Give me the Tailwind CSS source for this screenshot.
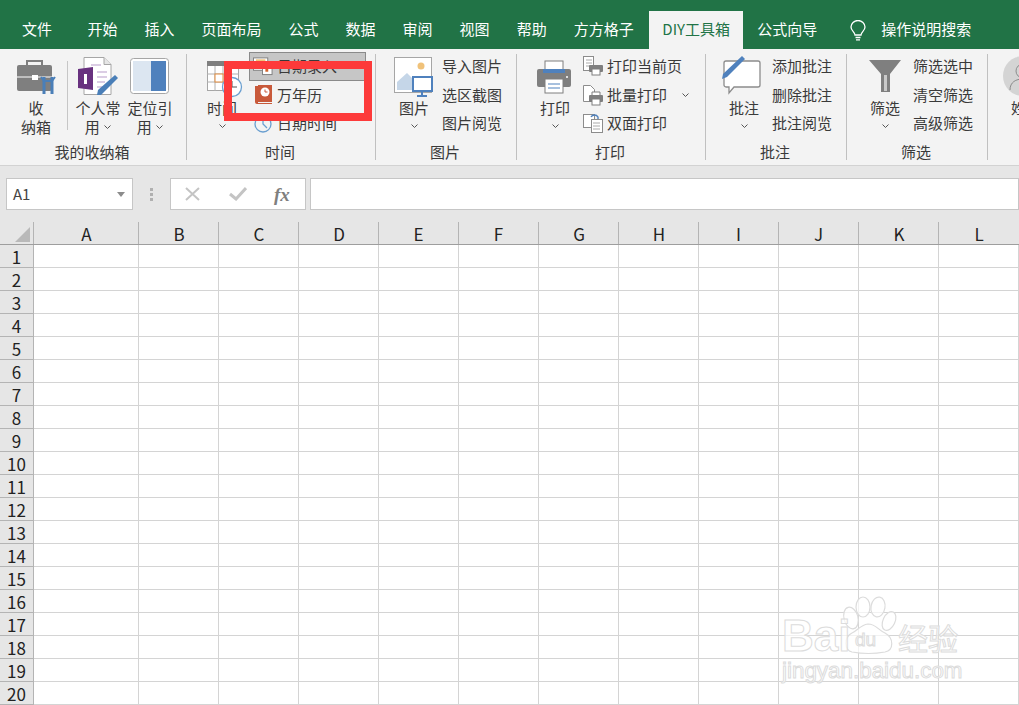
<!DOCTYPE html>
<html lang="zh-CN">
<head>
    <meta charset="UTF-8" />
    <title>Excel</title>
    <script src="https://cdn.jsdelivr.net/npm/@tailwindcss/browser@4"></script>
</head>
<body class="relative w-[1019px] h-[705px] overflow-hidden bg-white text-[15px] text-[#3a3a3a] font-['Noto_Sans_CJK_SC','Noto_Sans',sans-serif]">

    <!-- tabs -->
    <div class="flex h-[49px] bg-[#217346] pt-[11px] pl-[8px] text-white leading-[36px]">
        <div class="px-[14px] mr-[8px]">文件</div>
        <div class="px-[13.5px]">开始</div>
        <div class="px-[13.5px]">插入</div>
        <div class="px-[13.5px]">页面布局</div>
        <div class="px-[13.5px]">公式</div>
        <div class="px-[13.5px]">数据</div>
        <div class="px-[13.5px]">审阅</div>
        <div class="px-[13.5px]">视图</div>
        <div class="px-[13.5px]">帮助</div>
        <div class="px-[13.5px]">方方格子</div>
        <div class="ml-[2px] w-[94px] h-[38px] text-center bg-[#f3f3f3] text-[#217346]">DIY工具箱</div>
        <div class="px-[14px]">公式向导</div>
        <svg class="ml-[19px] mt-[9px]" width="16" height="21" viewBox="0 0 16 21" fill="none" stroke="#fff" stroke-width="1.3"><path d="M5 15c0-3-4-4-4-8a7 6.500 0 0 1 14 0c0 4-4 5-4 8z" /><path d="M5.500 17.500h5M6 19.800h4" /></svg>
        <div class="ml-[15px]">操作说明搜索</div>
    </div>

    <!-- ribbon -->
    <div class="flex h-[117px] bg-[#f3f3f3] border-b border-[#d2d2d2] overflow-hidden">

        <!-- 我的收纳箱 -->
        <div class="w-[186px] shrink-0 flex flex-col">
            <div class="h-[93px] flex">
                <div class="w-[50px] ml-[11px] pt-[8px] flex flex-col items-center">
                    <svg width="40" height="38" viewBox="0 0 40 38"><path d="M11 8V4h15v4" fill="none" stroke="#7f7f7f" stroke-width="2" /><rect x="1" y="8" width="35" height="26" rx="2" fill="#7f7f7f" /><path d="M1 20h35" stroke="#fff" /><rect x="16" y="18" width="6" height="5" fill="#fff" /><path d="M28 20v17M36 20v17" stroke="#4a7fb8" stroke-width="3" /><path d="M25 20l3 4 8 0 3-4" fill="none" stroke="#4a7fb8" stroke-width="2" /></svg>
                    <div class="mt-[3px] leading-[19px] text-center">收<br />纳箱</div>
                </div>
                <div class="ml-[6px] mt-[12px] w-px h-[69px] bg-[#c6c6c6]"></div>
                <div class="w-[46px] ml-[7px] pt-[8px] flex flex-col items-center">
                    <svg width="42" height="38" viewBox="0 0 42 38"><path d="M7 .5h20l7 7v30H7z" fill="#fff" stroke="#a6a6a6" /><path d="M27 .5v7h7" fill="#e6e6e6" stroke="#a6a6a6" /><path d="M14 8h10M20 15h10M20 20h10M20 25h8M20 30h6" stroke="#b79bc9" /><path d="M1 12l15-2v23l-15-2z" fill="#68317f" /><path d="M7 17h3v10h-3z" fill="#fff" /><path d="M38 18l3 3-17 17-4 0 1-5z" fill="#4a7fb8" /></svg>
                    <div class="mt-[3px] leading-[19px] whitespace-nowrap text-center">个人常<br />用 <svg class="inline ml-[1px] mb-[3px]" width="7" height="4" viewBox="0 0 7 4" fill="none" stroke="#555"><path d="M.5.500l3 3 3-3" /></svg></div>
                </div>
                <div class="w-[46px] ml-[6px] pt-[8px] flex flex-col items-center">
                    <svg width="40" height="38" viewBox="0 0 40 38"><rect x=".5" y="1.500" width="38" height="35" rx="3" fill="#fff" stroke="#a6a6a6" /><rect x="3" y="4" width="18" height="30" fill="#dce6f1" /><rect x="21" y="4" width="15" height="30" fill="#4f81bd" /></svg>
                    <div class="mt-[3px] leading-[19px] whitespace-nowrap text-center">定位引<br />用 <svg class="inline ml-[1px] mb-[3px]" width="7" height="4" viewBox="0 0 7 4" fill="none" stroke="#555"><path d="M.5.500l3 3 3-3" /></svg></div>
                </div>
            </div>
            <div class="h-[20px] leading-[20px] text-center pr-[2px]">我的收纳箱</div>
        </div>
        <div class="w-px h-[106px] mt-[5px] bg-[#c0c0c0] shrink-0"></div>

        <!-- 时间 -->
        <div class="w-[188px] shrink-0 flex flex-col">
            <div class="h-[93px] flex">
                <div class="w-[50px] ml-[10px] pt-[8px] flex flex-col items-center">
                    <svg class="overflow-visible" width="38" height="38" viewBox="0 0 38 38"><g transform="translate(4 4)"><rect x=".5" y=".5" width="31" height="29" fill="#fff" stroke="#a6a6a6" /><rect y="0" width="32" height="5" fill="#7f7f7f" /><path d="M8 5v25M16 5v25M24 5v25M0 13h32M0 21h32" stroke="#b0b0b0" /><rect x="8" y="13" width="8" height="8" fill="#fff" stroke="#e08a3c" /></g><circle cx="29" cy="30" r="9.500" fill="#fff" stroke="#6a9fd0" stroke-width="1.300" /><path d="M29 24v6h5" fill="none" stroke="#555" /></svg>
                    <div class="mt-[3px] leading-[19px]">时间</div>
                    <svg class="mt-[7px]" width="7" height="4" viewBox="0 0 7 4" fill="none" stroke="#555"><path d="M.5.500l3 3 3-3" /></svg>
                </div>
                <div class="ml-[2px] mt-[3px] w-[117px]">
                    <div class="h-[29px] flex items-center pl-[3px] pb-[1px] gap-[4px] bg-[#c6c6c6] border border-[#8a8a8a]">
                        <svg width="20" height="20" viewBox="0 0 21 20"><rect x=".5" y="1.500" width="15" height="13" fill="#fff" stroke="#7f7f7f" /><rect x="3" y="3" width="10" height="5" fill="#f0c27a" /><rect x="10" y="10" width="10" height="9" fill="#fff" stroke="#7f7f7f" /><rect x="13" y="13" width="3" height="3" fill="#d2622a" /></svg>
                        <span>日期录入</span>
                    </div>
                    <div class="h-[29px] flex items-center pl-[6px] pb-[1px] gap-[5px]">
                        <svg width="17" height="20" viewBox="0 0 17 20"><path d="M0 1h3v17h14v1H2a2 2 0 0 1-2-2z" fill="#c8593a" /><rect x="3" y="0" width="14" height="17" fill="#c8593a" /><circle cx="10" cy="7" r="4.500" fill="#fff" /><path d="M10 4.500V7h2.500" fill="none" stroke="#c8593a" /></svg>
                        <span>万年历</span>
                    </div>
                    <div class="h-[29px] flex items-center pl-[5px] pb-[2px] gap-[5px]">
                        <svg width="18" height="18" viewBox="0 0 18 18" fill="none" stroke="#6a9fd0" stroke-width="1.300"><circle cx="9" cy="9" r="8" /><path d="M9 3v6l4 4" /></svg>
                        <span>日期时间</span>
                    </div>
                </div>
            </div>
            <div class="h-[20px] leading-[20px] text-center pr-[2px]">时间</div>
        </div>
        <div class="w-px h-[106px] mt-[5px] bg-[#c0c0c0] shrink-0"></div>

        <!-- 图片 -->
        <div class="w-[140px] shrink-0 flex flex-col">
            <div class="h-[93px] flex">
                <div class="w-[50px] ml-[13px] pt-[8px] flex flex-col items-center">
                    <svg width="40" height="40" viewBox="0 0 40 40" class="-mb-[2px]"><rect x=".5" y=".5" width="37" height="35" fill="#fff" stroke="#a6a6a6" /><circle cx="27" cy="9" r="3.500" fill="#f0c27a" /><path d="M3 33v-8l10-9 9 9v8z" fill="#c5d6e8" /><rect x="19" y="20" width="19" height="14" fill="#fff" stroke="#4f81bd" stroke-width="2" /><path d="M28 34v4M23 39h10" stroke="#4f81bd" stroke-width="2" /></svg>
                    <div class="mt-[3px] leading-[19px]">图片</div>
                    <svg class="mt-[7px]" width="7" height="4" viewBox="0 0 7 4" fill="none" stroke="#555"><path d="M.5.500l3 3 3-3" /></svg>
                </div>
                <div class="ml-[3px] mt-[3px] leading-[28.5px]">
                    <div>导入图片</div>
                    <div>选区截图</div>
                    <div>图片阅览</div>
                </div>
            </div>
            <div class="h-[20px] leading-[20px] text-center pr-[2px]">图片</div>
        </div>
        <div class="w-px h-[106px] mt-[5px] bg-[#c0c0c0] shrink-0"></div>

        <!-- 打印 -->
        <div class="w-[188px] shrink-0 flex flex-col">
            <div class="h-[93px] flex">
                <div class="w-[50px] ml-[13px] pt-[8px] flex flex-col items-center">
                    <svg class="-ml-[2px]" width="36" height="38" viewBox="0 0 36 38"><rect x="9" y="4" width="18" height="12" fill="#fff" stroke="#7f7f7f" /><path d="M3 12h30a2 2 0 0 1 2 2v14a2 2 0 0 1-2 2H3a2 2 0 0 1-2-2V14a2 2 0 0 1 2-2z" fill="#7f7f7f" /><path d="M7 12h22v4H7z" fill="#4f81bd" /><rect x="9" y="22" width="18" height="14" fill="#fff" stroke="#7f7f7f" /><path d="M12 27h12M12 31h12" stroke="#4f81bd" /><circle cx="31" cy="20" r="1" fill="#fff" /></svg>
                    <div class="mt-[3px] leading-[19px]">打印</div>
                    <svg class="mt-[7px]" width="7" height="4" viewBox="0 0 7 4" fill="none" stroke="#555"><path d="M.5.500l3 3 3-3" /></svg>
                </div>
                <div class="ml-[3px] mt-[3px] leading-[28.5px]">
                    <div class="flex items-center gap-[4px] h-[28.500px]">
                        <svg width="20" height="20" viewBox="0 0 20 20"><rect x=".5" y=".5" width="10" height="14" fill="#fff" stroke="#8c8c8c" /><path d="M3 4h6M3 7h6M3 10h4" stroke="#aaa" /><rect x="6" y="9" width="14" height="7" rx="1" fill="#7f7f7f" /><rect x="9" y="13" width="8" height="6" fill="#fff" stroke="#7f7f7f" /></svg>
                        <span>打印当前页</span>
                    </div>
                    <div class="flex items-center gap-[4px] h-[28.500px]">
                        <svg width="20" height="22" viewBox="0 0 20 22"><path d="M.5 1.500h7l4 4v12H.5z" fill="#fff" stroke="#8c8c8c" /><rect x="6" y="11" width="14" height="7" rx="1" fill="#7f7f7f" /><rect x="9" y="15" width="8" height="6" fill="#fff" stroke="#7f7f7f" /><path d="M9 11V8h8v3" fill="#fff" stroke="#7f7f7f" /></svg>
                        <span>批量打印</span>
                        <svg class="ml-[11px]" width="7" height="4" viewBox="0 0 7 4" fill="none" stroke="#555"><path d="M.5.500l3 3 3-3" /></svg>
                    </div>
                    <div class="flex items-center gap-[4px] h-[28.500px]">
                        <svg width="20" height="20" viewBox="0 0 20 20" fill="#fff" stroke="#8c8c8c"><rect x=".5" y="1.500" width="11" height="13" /><rect x="8.500" y="6.500" width="11" height="13" /><path d="M10 10h7M10 13h7M10 16h7" stroke="#aaa" /><path d="M8 4a4 4 0 0 1 7 0l0 2" fill="none" stroke="#4f81bd" stroke-width="1.400" /></svg>
                        <span>双面打印</span>
                    </div>
                </div>
            </div>
            <div class="h-[20px] leading-[20px] text-center pr-[2px]">打印</div>
        </div>
        <div class="w-px h-[106px] mt-[5px] bg-[#c0c0c0] shrink-0"></div>

        <!-- 批注 -->
        <div class="w-[140px] shrink-0 flex flex-col">
            <div class="h-[93px] flex">
                <div class="w-[50px] ml-[13px] pt-[7px] flex flex-col items-center">
                    <svg class="-ml-[4px]" width="40" height="39" viewBox="0 0 40 39"><path d="M5 5h31a2 2 0 0 1 2 2v22a2 2 0 0 1-2 2H12l-5 6v-6H4a2 2 0 0 1-2-2V7a2 2 0 0 1 2-2z" fill="#fff" stroke="#8c8c8c" stroke-width="1.300" /><path d="M20 0l3 3L5 21l-5 2 1-5z" fill="#4f81bd" /></svg>
                    <div class="mt-[3px] leading-[19px]">批注</div>
                    <svg class="mt-[7px]" width="7" height="4" viewBox="0 0 7 4" fill="none" stroke="#555"><path d="M.5.500l3 3 3-3" /></svg>
                </div>
                <div class="ml-[3px] mt-[3px] leading-[28.5px]">
                    <div>添加批注</div>
                    <div>删除批注</div>
                    <div>批注阅览</div>
                </div>
            </div>
            <div class="h-[20px] leading-[20px] text-center pr-[2px]">批注</div>
        </div>
        <div class="w-px h-[106px] mt-[5px] bg-[#c0c0c0] shrink-0"></div>

        <!-- 筛选 -->
        <div class="w-[140px] shrink-0 flex flex-col">
            <div class="h-[93px] flex">
                <div class="w-[50px] ml-[13px] pt-[11px] flex flex-col items-center">
                    <svg width="34" height="35" viewBox="0 0 34 35"><path d="M1 0h32L22 14v18h-9V14z" fill="#7f7f7f" /><path d="M16 15h3v16h-3z" fill="#c9c9c9" /></svg>
                    <div class="mt-[3px] leading-[19px]">筛选</div>
                    <svg class="mt-[7px]" width="7" height="4" viewBox="0 0 7 4" fill="none" stroke="#555"><path d="M.5.500l3 3 3-3" /></svg>
                </div>
                <div class="ml-[3px] mt-[3px] leading-[28.5px]">
                    <div>筛选选中</div>
                    <div>清空筛选</div>
                    <div>高级筛选</div>
                </div>
            </div>
            <div class="h-[20px] leading-[20px] text-center pr-[2px]">筛选</div>
        </div>
        <div class="w-px h-[106px] mt-[5px] bg-[#c0c0c0] shrink-0"></div>

        <!-- 姓名 -->
        <div class="pl-[15px] pt-[7px] shrink-0">
            <svg width="40" height="40" viewBox="0 0 40 40"><circle cx="20" cy="20" r="20" fill="#d4d4d4" /><circle cx="20" cy="15" r="7" fill="none" stroke="#8c8c8c" /><path d="M7 34c0-8 6-11 13-11s13 3 13 11" fill="none" stroke="#8c8c8c" /></svg>
            <div class="mt-[2px] ml-[8px] leading-[19px]">姓名</div>
        </div>
    </div>

    <!-- formula bar -->
    <div class="flex h-[56px] bg-[#e6e6e6] pt-[12px] pl-[6px]">
        <div class="w-[127px] h-[32px] bg-white border border-[#c6c6c6] flex items-center justify-between pl-[6px] pr-[7px] text-[#444]">
            <span>A1</span>
            <svg width="8" height="5" viewBox="0 0 8 5"><path d="M0 0h8L4 5z" fill="#8c8c8c" /></svg>
        </div>
        <div class="w-[37px] flex flex-col items-center justify-center gap-[2px] h-[32px] pr-[1px]">
            <div class="w-[3px] h-[3px] bg-[#b0b0b0]"></div>
            <div class="w-[3px] h-[3px] bg-[#b0b0b0]"></div>
            <div class="w-[3px] h-[3px] bg-[#b0b0b0]"></div>
        </div>
        <div class="w-[136px] h-[32px] bg-white border border-[#c6c6c6] flex items-center pl-[14px]">
            <svg width="15" height="14" viewBox="0 0 15 14" fill="none" stroke="#c4c4c4" stroke-width="2"><path d="M1 1l13 12M14 1L1 13" /></svg>
            <svg class="ml-[29px]" width="18" height="14" viewBox="0 0 18 14" fill="none" stroke="#c4c4c4" stroke-width="3"><path d="M1 7l6 5L17 1" /></svg>
            <span class="ml-[27px] text-[19px] leading-none italic font-bold text-[#7f7f7f] font-['Liberation_Serif',serif]">fx</span>
        </div>
        <div class="ml-[4px] grow h-[32px] bg-white border border-[#c6c6c6]"></div>
    </div>

    <!-- sheet -->
    <div class="flex h-[23px] bg-[#e6e6e6] border-b border-[#9e9e9e] text-[17px] leading-[24px] text-[#222]">
        <div class="relative w-[34px] border-r border-[#b4b4b4]">
            <div class="absolute left-[15px] top-[5px] w-0 h-0 border-l-[15px] border-l-transparent border-b-[15px] border-b-[#b9b9b9]"></div>
        </div>
        <div class="w-[105px] pl-[1px] text-center border-r border-[#b4b4b4]">A</div>
        <div class="w-[80px] pl-[1px] text-center border-r border-[#b4b4b4]">B</div>
        <div class="w-[80px] pl-[1px] text-center border-r border-[#b4b4b4]">C</div>
        <div class="w-[80px] pl-[1px] text-center border-r border-[#b4b4b4]">D</div>
        <div class="w-[80px] text-center border-r border-[#b4b4b4]">E</div>
        <div class="w-[80px] text-center border-r border-[#b4b4b4]">F</div>
        <div class="w-[80px] pl-[1px] text-center border-r border-[#b4b4b4]">G</div>
        <div class="w-[80px] pl-[1px] text-center border-r border-[#b4b4b4]">H</div>
        <div class="w-[80px] text-center border-r border-[#b4b4b4]">I</div>
        <div class="w-[80px] text-center border-r border-[#b4b4b4]">J</div>
        <div class="w-[80px] pl-[1px] text-center border-r border-[#b4b4b4]">K</div>
        <div class="w-[80px] text-center">L</div>
    </div>
    <div id="rows"></div>

    <!-- red box drawn on the screenshot -->
    <div class="absolute left-[224px] top-[61px] w-[148px] h-[60px] border-[8px] border-[#fd3a3a]"></div>

    <!-- watermark -->
    <div class="absolute left-[782px] top-[595px] w-[190px] h-[90px] font-['Liberation_Sans',sans-serif]">
        <svg class="absolute left-[0px] top-[0px]" width="180" height="60" viewBox="0 0 180 60" fill="#ffffff" fill-opacity=".7" stroke="#dcdcdc" stroke-width="1.200">
            <ellipse cx="69" cy="23" rx="7" ry="11" transform="rotate(-15 69 23)" />
            <ellipse cx="81" cy="12" rx="7" ry="10" />
            <ellipse cx="96" cy="12" rx="7" ry="10" transform="rotate(10 96 12)" />
            <ellipse cx="107" cy="26" rx="6" ry="10" transform="rotate(25 107 26)" />
            <path d="M70 57c-8-2-8-15 0-19 5-2 8-8 16-9 8 0 10 6 17 9 9 5 9 17 0 19-11 2-22 2-33 0z" />
        </svg>
        <div class="absolute left-[0px] top-[17px] text-[44px] leading-[48px] font-bold text-white/70 [-webkit-text-stroke:1px_#dcdcdc]">Bai</div>
        <div class="absolute left-[73px] top-[33px] text-[19px] leading-[24px] text-white/70 [-webkit-text-stroke:1px_#dcdcdc]">du</div>
        <div class="absolute left-[116px] top-[24px] text-[30px] leading-[36px] text-white/70 font-['Noto_Sans_CJK_SC',sans-serif] [-webkit-text-stroke:1px_#dcdcdc]">经验</div>
        <div class="absolute left-[0px] top-[62px] text-[22.4px] leading-[28px] whitespace-nowrap text-white/70 [-webkit-text-stroke:1px_#dcdcdc]">jingyan.baidu.com</div>
    </div>

    <script>
        const rows = document.getElementById("rows");
        let html = "";
        for (let i = 1; i <= 20; i++) {
            html += '<div class="flex h-[23px] text-[17px] leading-[24px] text-[#222]">';
            html += '<div class="w-[34px] bg-[#e6e6e6] text-center border-r border-b border-[#b4b4b4]">' + i + "</div>";
            html += '<div class="w-[105px] border-r border-b border-[#d4d4d4]"></div>';
            for (let c = 0; c < 11; c++) {
                html += '<div class="w-[80px] border-r border-b border-[#d4d4d4]"></div>';
            }
            html += "</div>";
        }
        rows.innerHTML = html;
    </script>
</body>
</html>
